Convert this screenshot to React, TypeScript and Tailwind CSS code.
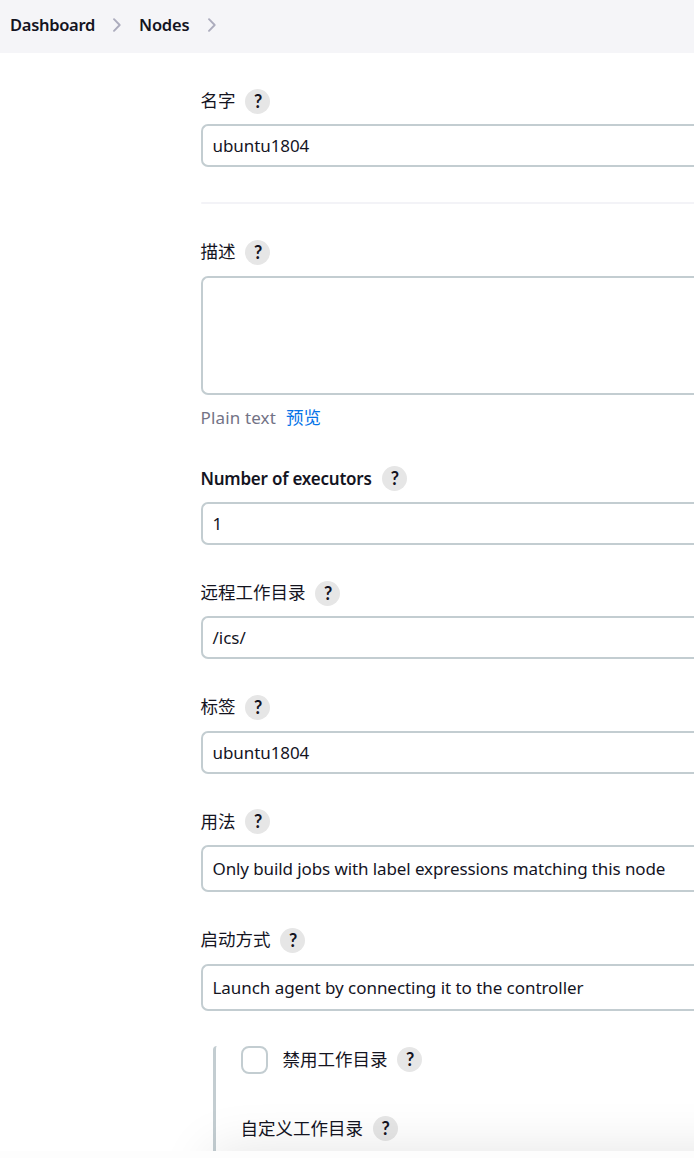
import type { ReactNode } from "react";

function Help() {
  return (
    <button
      type="button"
      className="flex size-[25px] shrink-0 items-center justify-center rounded-full bg-[#e6e6e6] pb-px pl-[1.5px] font-['Lato',sans-serif] text-[18px] leading-none font-bold text-[#14141f]"
    >
      ?
    </button>
  );
}

function Label({ children, className = "" }: { children: ReactNode; className?: string }) {
  return (
    <div className={`flex h-[25px] items-center gap-[9px] ${className}`}>
      <span className="-ml-[0.5px] pr-[0.5px] pb-0.5 text-[17.5px] leading-[23px] whitespace-nowrap">{children}</span>
      <Help />
    </div>
  );
}

function LowLabel({ children, className = "" }: { children: ReactNode; className?: string }) {
  return (
    <div className={`flex h-[25px] items-center gap-[9px] ${className}`}>
      <span className="-ml-[0.5px] pr-[0.5px] text-[17.5px] leading-[25px] whitespace-nowrap">{children}</span>
      <Help />
    </div>
  );
}

function Box({ children, className = "" }: { children?: ReactNode; className?: string }) {
  return (
    <div
      className={`flex shrink-0 items-center rounded-l-[7px] border-2 border-r-0 border-[#c3cdd1] bg-white pl-[9.5px] text-[17px] whitespace-nowrap ${className}`}
    >
      {children}
    </div>
  );
}

function Chevron() {
  return (
    <svg
      width="10"
      height="16"
      viewBox="0 0 10 16"
      fill="none"
      stroke="#acacbd"
      strokeWidth="1.9"
      strokeLinecap="round"
      strokeLinejoin="round"
    >
      <path d="M2 2.2 L7.7 8 L2 13.8" />
    </svg>
  );
}

export default function App() {
  return (
    <div className="flex h-[1158px] w-[694px] flex-col overflow-hidden bg-[#fdfdfd] font-['Noto_Sans','Noto_Sans_CJK_SC',sans-serif] text-[#14141f]">
      <nav className="flex h-[53px] shrink-0 items-center bg-[#f5f5f8] pb-[3px] pl-2.5 text-[16.5px] font-semibold">
        <span className="w-[102px] tracking-[-0.3px]">Dashboard</span>
        <Chevron />
        <span className="ml-[17px] w-[68px] tracking-[-0.2px]">Nodes</span>
        <Chevron />
      </nav>
      <main className="relative flex h-[1098px] shrink-0 flex-col overflow-hidden bg-white pt-9 pl-[201px]">
        <Label>名字</Label>
        <Box className="mt-2.5 h-[43px] tracking-[-0.08px]">ubuntu1804</Box>
        <hr className="mt-[35px] h-0.5 shrink-0 rounded-l-sm border-0 bg-[#f3f3f7]" />
        <Label className="mt-9">描述</Label>
        <Box className="mt-[11px] h-[119px]" />
        <div className="mt-[11px] flex h-6 shrink-0 items-center gap-2.5 text-[17px]">
          <span className="-ml-[0.5px] tracking-[0.15px] text-[#737386]">Plain text</span>
          <a className="pb-0.5 text-[17.5px] leading-[22px] text-[#0674e8]">预览</a>
        </div>
        <div className="mt-9 flex h-[25px] items-center gap-2.5">
          <span className="-ml-[0.5px] text-[17px] font-semibold tracking-[-0.23px] whitespace-nowrap">Number of executors</span>
          <Help />
        </div>
        <Box className="mt-[11px] h-[43px]">1</Box>
        <Label className="mt-9">远程工作目录</Label>
        <Box className="mt-2.5 h-[43px]">/ics/</Box>
        <Label className="mt-9">标签</Label>
        <Box className="mt-[11px] h-[43px] tracking-[-0.08px]">ubuntu1804</Box>
        <LowLabel className="mt-[35px]">用法</LowLabel>
        <Box className="mt-[11px] h-[47px] tracking-[-0.1px]">Only build jobs with label expressions matching this node</Box>
        <Label className="mt-9">启动方式</Label>
        <Box className="mt-[11px] h-[47px] tracking-[-0.05px]">Launch agent by connecting it to the controller</Box>
        <section className="mt-[35px] ml-3 h-[140px] shrink-0 rounded-tl-sm border-l-[3px] border-[#c3cdd1] pl-[25px]">
          <div className="flex h-7 items-center">
            <span className="mr-[15px] h-7 w-[27px] rounded-[8px] border-[2.5px] border-[#c3cdd1] bg-white" />
            <LowLabel className="-mt-px">禁用工作目录</LowLabel>
          </div>
          <LowLabel className="mt-[42px]">自定义工作目录</LowLabel>
        </section>
        <div className="pointer-events-none absolute top-[1098px] right-[-90px] left-[211px] h-40 shadow-[0_0_54px_0_rgba(0,0,0,0.11)]" />
      </main>
    </div>
  );
}
